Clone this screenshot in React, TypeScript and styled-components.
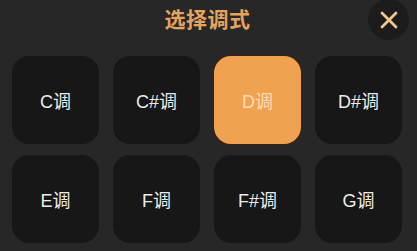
import React from "react";
import styled, { createGlobalStyle } from "styled-components";

const Global = createGlobalStyle`
  html, body { margin: 0; padding: 0; background: #272727; }
  body { font-family: "Noto Sans CJK SC", "Noto Sans", sans-serif; }
`;

const Panel = styled.div`
  width: 417px;
  height: 251px;
  background: #272727;
  box-sizing: border-box;
  padding: 0 14px 0 12px;
  display: flex;
  flex-direction: column;
`;

const Header = styled.div`
  position: relative;
  height: 56px;
  display: flex;
  justify-content: center;
  align-items: flex-start;
`;

const Title = styled.div`
  margin-top: 2px;
  font-size: 21px;
  line-height: 32px;
  font-weight: 700;
  color: #e5a35c;
  letter-spacing: 0.5px;
`;

const Close = styled.button`
  position: absolute;
  right: -6px;
  top: -1px;
  width: 41px;
  height: 41px;
  border-radius: 50%;
  border: none;
  background: #1c1c1c;
  display: flex;
  align-items: center;
  justify-content: center;
  padding: 0;
`;

const Grid = styled.div`
  display: grid;
  grid-template-columns: repeat(4, 87px);
  grid-auto-rows: 88px;
  column-gap: 14px;
  row-gap: 11px;
`;

const Tile = styled.div<{ $active?: boolean }>`
  border-radius: 17px;
  background: ${(p) => (p.$active ? "#f1a250" : "#171717")};
  box-shadow: ${(p) => (p.$active ? "0 0 0 1px #3a2410" : "none")};
  color: ${(p) => (p.$active ? "#f8dcb4" : "#ececec")};
  display: flex;
  align-items: center;
  justify-content: center;
  font-size: 18px;
  font-family: "Liberation Sans", "Noto Sans CJK SC", sans-serif;
`;

const keys = ["C", "C#", "D", "D#", "E", "F", "F#", "G"];

export default function App() {
  return (
    <>
      <Global />
      <Panel>
        <Header>
          <Title>选择调式</Title>
          <Close>
            <svg width="18" height="18" viewBox="0 0 18 18">
              <path d="M2 2 L16 16 M16 2 L2 16" stroke="#f2c58e" strokeWidth="2.8" strokeLinecap="round" />
            </svg>
          </Close>
        </Header>
        <Grid>
          {keys.map((k) => (
            <Tile key={k} $active={k === "D"}>
              {k}调
            </Tile>
          ))}
        </Grid>
      </Panel>
    </>
  );
}
